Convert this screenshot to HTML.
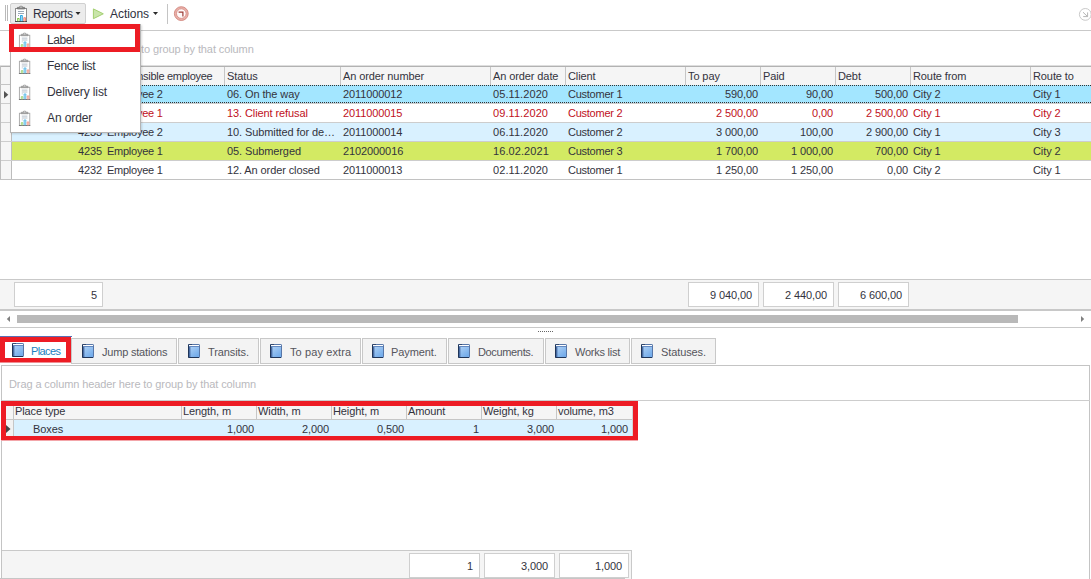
<!DOCTYPE html>
<html>
<head>
<meta charset="utf-8">
<title>Orders</title>
<style>
html,body{margin:0;padding:0;}
body{width:1091px;height:579px;position:relative;overflow:hidden;background:#fff;font-family:"Liberation Sans",sans-serif;font-size:11px;color:#33333d;}
.abs{position:absolute;}
.t{position:absolute;white-space:nowrap;line-height:13px;height:13px;letter-spacing:-0.1px;}
.r{text-align:right;}
.hl{position:absolute;height:1px;background:#c6c6c6;}
.vl{position:absolute;width:1px;background:#c6c6c6;}
.hdr{position:absolute;background:#f5f5f5;}
.row{position:absolute;left:12px;width:1079px;height:18px;}
.red{color:#c0101c;}
.sumbox{position:absolute;background:#fff;border:1px solid #cfcfcf;box-sizing:border-box;}
.tab{position:absolute;top:338px;height:26px;border:1px solid #c8c8c8;box-sizing:border-box;background:#f3f3f3;}
.tab .t{top:7px;font-size:11px;color:#55555c;}
.menu .t{font-size:12px;line-height:14px;height:14px;}
</style>
</head>
<body>

<svg width="0" height="0" style="position:absolute">
  <defs>
    <linearGradient id="bk" x1="0" y1="0" x2="0.6" y2="1">
      <stop offset="0" stop-color="#b9d8f8"/>
      <stop offset="1" stop-color="#74acea"/>
    </linearGradient>
    <symbol id="book" viewBox="0 0 12 14">
      <rect x="0.5" y="0.5" width="11" height="13" rx="0.6" fill="url(#bk)" stroke="#5877a8" stroke-width="1"/>
      <path d="M0.5 1V13.5H11" fill="none" stroke="#1f3558" stroke-width="1"/>
      <path d="M0.5 0.9V0.5H4" fill="none" stroke="#33496e" stroke-width="1"/>
      <rect x="1" y="1" width="10" height="1" fill="#ffffff"/>
      <rect x="1" y="2" width="10" height="1" fill="#6489c0"/>
      <rect x="1" y="3" width="1.4" height="10" fill="#486ba3"/>
    </symbol>
    <symbol id="rep" viewBox="0 0 14 17">
      <rect x="1.5" y="3.5" width="11" height="13" fill="#ffffff" stroke="#8d8d8d" stroke-width="1"/>
      <rect x="1" y="16" width="12" height="1" fill="#4a4a4a"/>
      <path d="M3.4 4V2.4H5.2C5.2 0.7 8.8 0.7 8.8 2.4H10.6V4Z" fill="#8a8a8a" stroke="#6c6c6c" stroke-width="0.7"/>
      <rect x="6.2" y="1.6" width="1.6" height="0.9" fill="#e8e8e8"/>
      <rect x="4" y="6" width="6" height="1" fill="#9ba9b8"/>
      <rect x="4" y="8" width="6" height="1" fill="#9ba9b8"/>
      <rect x="4" y="10" width="1" height="1" fill="#9ba9b8"/>
      <rect x="3" y="13" width="2.6" height="3.2" rx="0.7" fill="#7cc243"/>
      <rect x="3.8" y="14" width="1" height="2" fill="#d9f0c4"/>
      <rect x="6" y="10" width="2.8" height="6.2" rx="0.8" fill="#29a4e0"/>
      <rect x="6.9" y="11" width="1" height="5" fill="#9fdcf7"/>
      <rect x="9.3" y="12.2" width="2.7" height="4" rx="0.7" fill="#f0806e"/>
      <rect x="10.2" y="13.2" width="0.9" height="3" fill="#f9c4ba"/>
    </symbol>
  </defs>
</svg>

<!-- ============ TOP TOOLBAR ============ -->
<div class="abs" style="left:5px;top:5px;width:1px;height:16px;background:#b9b9b9"></div>
<div class="abs" style="left:7px;top:5px;width:1px;height:16px;background:#b9b9b9"></div>
<div class="abs" style="left:10px;top:3px;width:76px;height:21px;box-sizing:border-box;border:1px solid #d0d0d0;border-radius:2px;background:#ececec"></div>
<svg class="abs" style="left:14px;top:5px" width="14" height="17"><use href="#rep"/></svg>
<div class="t" style="left:33px;top:7px;font-size:12px;line-height:14px;height:14px;letter-spacing:-0.35px;color:#2f3140">Reports</div>
<svg class="abs" style="left:75px;top:12px" width="6" height="4"><path d="M0.5 0H5.5L3 3Z" fill="#2a2a2a"/></svg>
<svg class="abs" style="left:92px;top:8px" width="13" height="12" viewBox="0 0 13 12"><path d="M1.4 0.9L11.3 5.8L1.4 10.7Z" fill="#c9e5aa" stroke="#a3cf70" stroke-width="1" stroke-linejoin="round"/></svg>
<div class="t" style="left:110px;top:7px;font-size:12px;line-height:14px;height:14px;letter-spacing:-0.05px;color:#2f3140">Actions</div>
<svg class="abs" style="left:153px;top:12px" width="6" height="4"><path d="M0 0H5L2.5 3Z" fill="#2a2a2a"/></svg>
<div class="abs" style="left:167px;top:4px;width:1px;height:20px;background:#c4c4c4"></div>
<svg class="abs" style="left:173px;top:6px" width="16" height="16" viewBox="0 0 16 16">
  <circle cx="8.3" cy="7.6" r="6.9" fill="#eab0a9" stroke="#d0837b" stroke-width="0.9"/>
  <circle cx="8.3" cy="7.6" r="4.8" fill="#fffafa" stroke="#d38880" stroke-width="0.8"/>
  <path d="M5.6 6.2H9.9V10.4" fill="none" stroke="#9c3b35" stroke-width="1.2"/>
</svg>
<svg class="abs" style="left:1078px;top:7px" width="14" height="15" viewBox="0 0 14 15">
  <circle cx="7.3" cy="7.4" r="5.9" fill="#fff" stroke="#c9c9c9" stroke-width="1"/>
  <path d="M5 5.2L9.6 9.6M9.6 5.4V9.6H5.2" fill="none" stroke="#b5b5b5" stroke-width="1"/>
</svg>

<!-- ============ TOP GRID ============ -->
<div class="hl" style="left:0;top:30px;width:1091px;background:#c9c9c9"></div>
<div class="t" style="left:141px;top:43px;color:#b9b9bd">to group by that column</div>

<!-- header -->
<div class="hl" style="left:0;top:65px;width:1091px;background:#dedede"></div>
<div class="hdr" style="left:0;top:66px;width:1091px;height:19px;border-top:1px solid #b2b2b2;box-sizing:border-box"></div>
<div class="vl" style="left:0;top:66px;height:114px;background:#bdbdbd"></div>
<div class="abs" style="left:1px;top:85px;width:10px;height:95px;background:#f6f6f6"></div>
<div class="vl" style="left:11px;top:67px;height:113px;background:#bcbcbc"></div>
<div class="vl" style="left:224px;top:67px;height:18px"></div>
<div class="vl" style="left:340px;top:67px;height:18px"></div>
<div class="vl" style="left:490px;top:67px;height:18px"></div>
<div class="vl" style="left:565px;top:67px;height:18px"></div>
<div class="vl" style="left:685px;top:67px;height:18px"></div>
<div class="vl" style="left:760px;top:67px;height:18px"></div>
<div class="vl" style="left:835px;top:67px;height:18px"></div>
<div class="vl" style="left:910px;top:67px;height:18px"></div>
<div class="vl" style="left:1030px;top:67px;height:18px"></div>
<div class="t" style="left:107px;top:70px;letter-spacing:-0.3px">Responsible employee</div>
<div class="vl" style="left:104px;top:67px;height:18px"></div>
<div class="t" style="left:227px;top:70px">Status</div>
<div class="t" style="left:343px;top:70px">An order number</div>
<div class="t" style="left:493px;top:70px">An order date</div>
<div class="t" style="left:568px;top:70px">Client</div>
<div class="t" style="left:688px;top:70px">To pay</div>
<div class="t" style="left:763px;top:70px">Paid</div>
<div class="t" style="left:838px;top:70px">Debt</div>
<div class="t" style="left:913px;top:70px">Route from</div>
<div class="t" style="left:1033px;top:70px">Route to</div>

<!-- rows -->
<div class="row" style="top:85px;background:#a3e6ff;border-top:1px dotted #333;border-bottom:1px dotted #333;box-sizing:border-box"></div>
<div class="row" style="top:104px;background:#fff"></div>
<div class="row" style="top:123px;background:#d9f1ff"></div>
<div class="row" style="top:142px;background:#d3ea63"></div>
<div class="row" style="top:161px;background:#fff"></div>
<div class="hl" style="left:1px;top:103px;width:1090px;background:#cdcdcd"></div>
<div class="hl" style="left:1px;top:122px;width:1090px;background:#cdcdcd"></div>
<div class="hl" style="left:1px;top:141px;width:1090px;background:#cdcdcd"></div>
<div class="hl" style="left:1px;top:160px;width:1090px;background:#cdcdcd"></div>
<div class="hl" style="left:0;top:179px;width:1091px;background:#c2c2c2"></div>
<svg class="abs" style="left:4px;top:91px" width="5" height="8"><path d="M0 0L4.3 3.7L0 7.4Z" fill="#555"/></svg>
<div class="hl" style="left:0;top:84px;width:12px;background:#c4c4c4"></div>

<!-- row 1 -->
<div class="t r" style="left:13px;width:89px;top:88px">4234</div>
<div class="t" style="left:107px;top:88px;letter-spacing:-0.25px">Employee 2</div>
<div class="t" style="left:227px;top:88px">06. On the way</div>
<div class="t" style="left:343px;top:88px">2011000012</div>
<div class="t" style="left:493px;top:88px;letter-spacing:0.08px">05.11.2020</div>
<div class="t" style="left:568px;top:88px;letter-spacing:-0.25px">Customer 1</div>
<div class="t r" style="left:688px;width:70px;top:88px">590,00</div>
<div class="t r" style="left:763px;width:70px;top:88px">90,00</div>
<div class="t r" style="left:838px;width:70px;top:88px">500,00</div>
<div class="t" style="left:913px;top:88px">City 2</div>
<div class="t" style="left:1033px;top:88px">City 1</div>
<!-- row 2 -->
<div class="t r red" style="left:13px;width:89px;top:107px">4236</div>
<div class="t red" style="left:107px;top:107px;letter-spacing:-0.25px">Employee 1</div>
<div class="t red" style="left:227px;top:107px">13. Client refusal</div>
<div class="t red" style="left:343px;top:107px">2011000015</div>
<div class="t red" style="left:493px;top:107px;letter-spacing:0.08px">09.11.2020</div>
<div class="t red" style="left:568px;top:107px;letter-spacing:-0.25px">Customer 2</div>
<div class="t r red" style="left:688px;width:70px;top:107px">2 500,00</div>
<div class="t r red" style="left:763px;width:70px;top:107px">0,00</div>
<div class="t r red" style="left:838px;width:70px;top:107px">2 500,00</div>
<div class="t red" style="left:913px;top:107px">City 1</div>
<div class="t red" style="left:1033px;top:107px">City 2</div>
<!-- row 3 -->
<div class="t r" style="left:13px;width:89px;top:126px">4233</div>
<div class="t" style="left:107px;top:126px;letter-spacing:-0.25px">Employee 2</div>
<div class="t" style="left:227px;top:126px">10. Submitted for de…</div>
<div class="t" style="left:343px;top:126px">2011000014</div>
<div class="t" style="left:493px;top:126px;letter-spacing:0.08px">06.11.2020</div>
<div class="t" style="left:568px;top:126px;letter-spacing:-0.25px">Customer 2</div>
<div class="t r" style="left:688px;width:70px;top:126px">3 000,00</div>
<div class="t r" style="left:763px;width:70px;top:126px">100,00</div>
<div class="t r" style="left:838px;width:70px;top:126px">2 900,00</div>
<div class="t" style="left:913px;top:126px">City 1</div>
<div class="t" style="left:1033px;top:126px">City 3</div>
<!-- row 4 -->
<div class="t r" style="left:13px;width:89px;top:145px">4235</div>
<div class="t" style="left:107px;top:145px;letter-spacing:-0.25px">Employee 1</div>
<div class="t" style="left:227px;top:145px">05. Submerged</div>
<div class="t" style="left:343px;top:145px">2102000016</div>
<div class="t" style="left:493px;top:145px;letter-spacing:0.08px">16.02.2021</div>
<div class="t" style="left:568px;top:145px;letter-spacing:-0.25px">Customer 3</div>
<div class="t r" style="left:688px;width:70px;top:145px">1 700,00</div>
<div class="t r" style="left:763px;width:70px;top:145px">1 000,00</div>
<div class="t r" style="left:838px;width:70px;top:145px">700,00</div>
<div class="t" style="left:913px;top:145px">City 1</div>
<div class="t" style="left:1033px;top:145px">City 2</div>
<!-- row 5 -->
<div class="t r" style="left:13px;width:89px;top:164px">4232</div>
<div class="t" style="left:107px;top:164px;letter-spacing:-0.25px">Employee 1</div>
<div class="t" style="left:227px;top:164px">12. An order closed</div>
<div class="t" style="left:343px;top:164px">2011000013</div>
<div class="t" style="left:493px;top:164px;letter-spacing:0.08px">02.11.2020</div>
<div class="t" style="left:568px;top:164px;letter-spacing:-0.25px">Customer 1</div>
<div class="t r" style="left:688px;width:70px;top:164px">1 250,00</div>
<div class="t r" style="left:763px;width:70px;top:164px">1 250,00</div>
<div class="t r" style="left:838px;width:70px;top:164px">0,00</div>
<div class="t" style="left:913px;top:164px">City 2</div>
<div class="t" style="left:1033px;top:164px">City 1</div>

<!-- footer summary -->
<div class="abs" style="left:0;top:279px;width:1091px;height:32px;background:#f5f5f5;border-top:1px solid #c9c9c9;border-bottom:2px solid #c8c8c8;box-sizing:border-box"></div>
<div class="sumbox" style="left:14px;top:282px;width:89px;height:25px"></div>
<div class="t r" style="left:14px;width:83px;top:289px">5</div>
<div class="sumbox" style="left:688px;top:282px;width:71px;height:25px"></div>
<div class="t r" style="left:688px;width:64px;top:289px">9 040,00</div>
<div class="sumbox" style="left:763px;top:282px;width:71px;height:25px"></div>
<div class="t r" style="left:763px;width:64px;top:289px">2 440,00</div>
<div class="sumbox" style="left:838px;top:282px;width:71px;height:25px"></div>
<div class="t r" style="left:838px;width:64px;top:289px">6 600,00</div>

<!-- h scrollbar -->
<svg class="abs" style="left:6px;top:316px" width="5" height="7"><path d="M4 0L0.8 3L4 6Z" fill="#808080"/></svg>
<div class="abs" style="left:17px;top:315px;width:1001px;height:8px;background:#b9b9b9"></div>
<svg class="abs" style="left:1081px;top:316px" width="5" height="7"><path d="M0 0L3.2 3L0 6Z" fill="#808080"/></svg>
<div class="hl" style="left:0;top:327px;width:1091px;background:#c9c9c9"></div>
<div class="abs" style="left:538px;top:331px;width:15px;height:1px;background:repeating-linear-gradient(90deg,#666 0 1px,transparent 1px 2px)"></div>

<!-- ============ TABS ============ -->
<div class="tab" style="left:71px;width:106px"><svg class="abs" style="left:10px;top:5px" width="12" height="14"><use href="#book"/></svg><div class="t" style="left:30px;letter-spacing:-0.2px">Jump stations</div></div>
<div class="tab" style="left:178px;width:81px"><svg class="abs" style="left:9px;top:5px" width="12" height="14"><use href="#book"/></svg><div class="t" style="left:29px">Transits.</div></div>
<div class="tab" style="left:260px;width:101px"><svg class="abs" style="left:9px;top:5px" width="12" height="14"><use href="#book"/></svg><div class="t" style="left:29px;letter-spacing:0.1px">To pay extra</div></div>
<div class="tab" style="left:362px;width:85px"><svg class="abs" style="left:9px;top:5px" width="12" height="14"><use href="#book"/></svg><div class="t" style="left:28px">Payment.</div></div>
<div class="tab" style="left:448px;width:96px"><svg class="abs" style="left:9px;top:5px" width="12" height="14"><use href="#book"/></svg><div class="t" style="left:29px;letter-spacing:-0.35px">Documents.</div></div>
<div class="tab" style="left:545px;width:85px"><svg class="abs" style="left:9px;top:5px" width="12" height="14"><use href="#book"/></svg><div class="t" style="left:29px;letter-spacing:-0.25px">Works list</div></div>
<div class="tab" style="left:631px;width:85px"><svg class="abs" style="left:9px;top:5px" width="12" height="14"><use href="#book"/></svg><div class="t" style="left:29px">Statuses.</div></div>

<!-- tab page -->
<div class="abs" style="left:1px;top:365px;width:1089px;height:214px;border:1px solid #c4c4c4;border-bottom:none;box-sizing:border-box;background:#fff"></div>
<div class="t" style="left:9px;top:378px;color:#b9b9bd">Drag a column header here to group by that column</div>
<div class="hl" style="left:2px;top:400px;width:1088px;background:#cdcdcd"></div>

<!-- active tab -->
<div class="abs" style="left:0;top:336px;width:72px;height:1px;background:#5b6fb5"></div>
<div class="abs" style="left:0;top:337px;width:71px;height:25px;background:#fff;border:5px solid #ed1c24;border-bottom-width:4px;box-sizing:border-box"></div>
<div class="abs" style="left:0;top:362px;width:71px;height:1px;background:#ef8d92"></div>
<svg class="abs" style="left:12px;top:343px" width="12" height="14"><use href="#book"/></svg>
<div class="t" style="left:31px;top:345px;color:#1a7fc0;letter-spacing:-0.6px">Places</div>

<!-- lower grid -->
<div class="hdr" style="left:6px;top:406px;width:626px;height:13px"></div>
<div class="abs" style="left:6px;top:420px;width:8px;height:17px;background:#f2f2f2"></div>
<div class="abs" style="left:14px;top:420px;width:618px;height:17px;background:#d9f1ff"></div>
<div class="vl" style="left:632px;top:406px;height:31px;background:#d4d4d4"></div>
<div class="hl" style="left:6px;top:419px;width:626px"></div>
<div class="vl" style="left:13px;top:406px;height:31px"></div>
<div class="vl" style="left:181px;top:406px;height:13px"></div>
<div class="vl" style="left:256px;top:406px;height:13px"></div>
<div class="vl" style="left:331px;top:406px;height:13px"></div>
<div class="vl" style="left:406px;top:406px;height:13px"></div>
<div class="vl" style="left:481px;top:406px;height:13px"></div>
<div class="vl" style="left:556px;top:406px;height:13px"></div>
<div class="t" style="left:15px;top:405px">Place type</div>
<div class="t" style="left:183px;top:405px">Length, m</div>
<div class="t" style="left:258px;top:405px">Width, m</div>
<div class="t" style="left:333px;top:405px">Height, m</div>
<div class="t" style="left:408px;top:405px">Amount</div>
<div class="t" style="left:483px;top:405px">Weight, kg</div>
<div class="t" style="left:558px;top:405px">volume, m3</div>
<div class="t" style="left:33px;top:423px">Boxes</div>
<div class="t r" style="left:183px;width:71px;top:423px">1,000</div>
<div class="t r" style="left:258px;width:71px;top:423px">2,000</div>
<div class="t r" style="left:333px;width:71px;top:423px">0,500</div>
<div class="t r" style="left:408px;width:71px;top:423px">1</div>
<div class="t r" style="left:483px;width:71px;top:423px">3,000</div>
<div class="t r" style="left:558px;width:70px;top:423px">1,000</div>
<svg class="abs" style="left:6px;top:425px" width="5" height="8"><path d="M0 0L4.5 4L0 8Z" fill="#444"/></svg>
<!-- red frame around lower grid -->
<div class="abs" style="left:1px;top:401px;width:637px;height:39px;border:5px solid #ed1c24;border-bottom-width:4px;box-sizing:border-box"></div>
<div class="abs" style="left:1px;top:440px;width:637px;height:1px;background:#f3a6aa"></div>

<!-- lower footer -->
<div class="abs" style="left:2px;top:550px;width:630px;height:29px;background:#f5f5f5;border-top:1px solid #c9c9c9;border-right:1px solid #c9c9c9;box-sizing:border-box"></div>
<div class="sumbox" style="left:409px;top:553px;width:71px;height:25px"></div>
<div class="t r" style="left:409px;width:64px;top:560px">1</div>
<div class="sumbox" style="left:484px;top:553px;width:71px;height:25px"></div>
<div class="t r" style="left:484px;width:64px;top:560px">3,000</div>
<div class="sumbox" style="left:559px;top:553px;width:70px;height:25px"></div>
<div class="t r" style="left:559px;width:63px;top:560px">1,000</div>

<div class="abs" style="left:0;top:578px;width:625px;height:1px;background:#c6c6c6"></div>

<!-- ============ DROPDOWN MENU ============ -->
<div class="abs menu" style="left:10px;top:24px;width:131px;height:109px;background:#fff;border:1px solid #b4b4b4;box-sizing:border-box;box-shadow:1px 1px 2px rgba(0,0,0,0.15)">
  <svg class="abs" style="left:7px;top:7px;opacity:0.75" width="13.2" height="16"><use href="#rep"/></svg>
  <svg class="abs" style="left:7px;top:33px;opacity:0.75" width="13.2" height="16"><use href="#rep"/></svg>
  <svg class="abs" style="left:7px;top:59px;opacity:0.75" width="13.2" height="16"><use href="#rep"/></svg>
  <svg class="abs" style="left:7px;top:85px;opacity:0.75" width="13.2" height="16"><use href="#rep"/></svg>
  <div class="t" style="left:36px;top:8px;letter-spacing:-0.45px">Label</div>
  <div class="t" style="left:36px;top:34px;letter-spacing:-0.3px">Fence list</div>
  <div class="t" style="left:36px;top:60px">Delivery list</div>
  <div class="t" style="left:36px;top:86px">An order</div>
</div>
<div class="abs" style="left:9px;top:24px;width:131px;height:28px;border:5px solid #ed1c24;box-sizing:border-box"></div>

</body>
</html>
